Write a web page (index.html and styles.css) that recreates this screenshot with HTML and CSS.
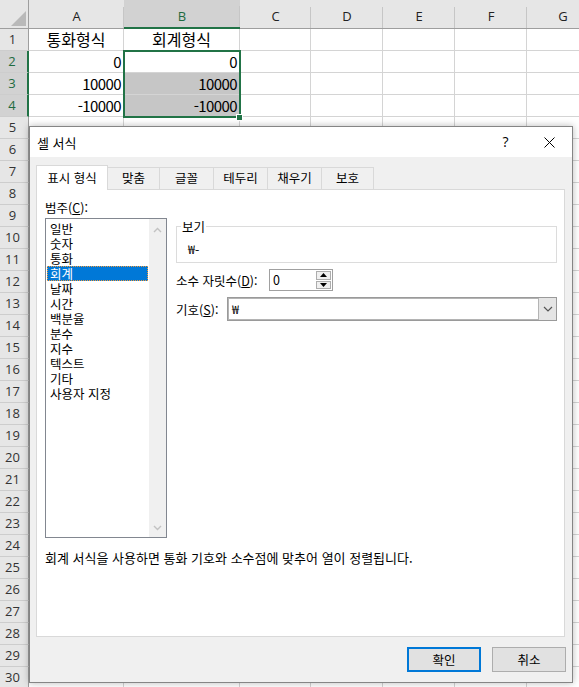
FILE: index.html
```html
<!DOCTYPE html>
<html lang="ko">
<head>
<meta charset="utf-8">
<title>셀 서식</title>
<link rel="stylesheet" href="styles.css">
</head>
<body>
<div class="sheet">
  <div class="corner"></div>
  <div class="ch">A</div><div class="ch sel">B</div><div class="ch">C</div><div class="ch">D</div><div class="ch">E</div><div class="ch">F</div><div class="ch">G</div>

  <div class="rh">1</div><div class="c ctr">통화형식</div><div class="c ctr">회계형식</div><div class="c"></div><div class="c"></div><div class="c"></div><div class="c"></div><div class="c"></div>
  <div class="rh sel">2</div><div class="c">0</div><div class="c">0</div><div class="c"></div><div class="c"></div><div class="c"></div><div class="c"></div><div class="c"></div>
  <div class="rh sel">3</div><div class="c">10000</div><div class="c hl">10000</div><div class="c"></div><div class="c"></div><div class="c"></div><div class="c"></div><div class="c"></div>
  <div class="rh sel">4</div><div class="c">-10000</div><div class="c hl">-10000</div><div class="c"></div><div class="c"></div><div class="c"></div><div class="c"></div><div class="c"></div>
  <div class="rh">5</div><div class="c"></div><div class="c"></div><div class="c"></div><div class="c"></div><div class="c"></div><div class="c"></div><div class="c"></div>
  <div class="rh">6</div><div class="c"></div><div class="c"></div><div class="c"></div><div class="c"></div><div class="c"></div><div class="c"></div><div class="c"></div>
  <div class="rh">7</div><div class="c"></div><div class="c"></div><div class="c"></div><div class="c"></div><div class="c"></div><div class="c"></div><div class="c"></div>
  <div class="rh">8</div><div class="c"></div><div class="c"></div><div class="c"></div><div class="c"></div><div class="c"></div><div class="c"></div><div class="c"></div>
  <div class="rh">9</div><div class="c"></div><div class="c"></div><div class="c"></div><div class="c"></div><div class="c"></div><div class="c"></div><div class="c"></div>
  <div class="rh">10</div><div class="c"></div><div class="c"></div><div class="c"></div><div class="c"></div><div class="c"></div><div class="c"></div><div class="c"></div>
  <div class="rh">11</div><div class="c"></div><div class="c"></div><div class="c"></div><div class="c"></div><div class="c"></div><div class="c"></div><div class="c"></div>
  <div class="rh">12</div><div class="c"></div><div class="c"></div><div class="c"></div><div class="c"></div><div class="c"></div><div class="c"></div><div class="c"></div>
  <div class="rh">13</div><div class="c"></div><div class="c"></div><div class="c"></div><div class="c"></div><div class="c"></div><div class="c"></div><div class="c"></div>
  <div class="rh">14</div><div class="c"></div><div class="c"></div><div class="c"></div><div class="c"></div><div class="c"></div><div class="c"></div><div class="c"></div>
  <div class="rh">15</div><div class="c"></div><div class="c"></div><div class="c"></div><div class="c"></div><div class="c"></div><div class="c"></div><div class="c"></div>
  <div class="rh">16</div><div class="c"></div><div class="c"></div><div class="c"></div><div class="c"></div><div class="c"></div><div class="c"></div><div class="c"></div>
  <div class="rh">17</div><div class="c"></div><div class="c"></div><div class="c"></div><div class="c"></div><div class="c"></div><div class="c"></div><div class="c"></div>
  <div class="rh">18</div><div class="c"></div><div class="c"></div><div class="c"></div><div class="c"></div><div class="c"></div><div class="c"></div><div class="c"></div>
  <div class="rh">19</div><div class="c"></div><div class="c"></div><div class="c"></div><div class="c"></div><div class="c"></div><div class="c"></div><div class="c"></div>
  <div class="rh">20</div><div class="c"></div><div class="c"></div><div class="c"></div><div class="c"></div><div class="c"></div><div class="c"></div><div class="c"></div>
  <div class="rh">21</div><div class="c"></div><div class="c"></div><div class="c"></div><div class="c"></div><div class="c"></div><div class="c"></div><div class="c"></div>
  <div class="rh">22</div><div class="c"></div><div class="c"></div><div class="c"></div><div class="c"></div><div class="c"></div><div class="c"></div><div class="c"></div>
  <div class="rh">23</div><div class="c"></div><div class="c"></div><div class="c"></div><div class="c"></div><div class="c"></div><div class="c"></div><div class="c"></div>
  <div class="rh">24</div><div class="c"></div><div class="c"></div><div class="c"></div><div class="c"></div><div class="c"></div><div class="c"></div><div class="c"></div>
  <div class="rh">25</div><div class="c"></div><div class="c"></div><div class="c"></div><div class="c"></div><div class="c"></div><div class="c"></div><div class="c"></div>
  <div class="rh">26</div><div class="c"></div><div class="c"></div><div class="c"></div><div class="c"></div><div class="c"></div><div class="c"></div><div class="c"></div>
  <div class="rh">27</div><div class="c"></div><div class="c"></div><div class="c"></div><div class="c"></div><div class="c"></div><div class="c"></div><div class="c"></div>
  <div class="rh">28</div><div class="c"></div><div class="c"></div><div class="c"></div><div class="c"></div><div class="c"></div><div class="c"></div><div class="c"></div>
  <div class="rh">29</div><div class="c"></div><div class="c"></div><div class="c"></div><div class="c"></div><div class="c"></div><div class="c"></div><div class="c"></div>
  <div class="rh">30</div><div class="c"></div><div class="c"></div><div class="c"></div><div class="c"></div><div class="c"></div><div class="c"></div><div class="c"></div>
</div>

<div class="selection"><span class="handle"></span></div>

<div class="dialog">
  <div class="titlebar">
    <div class="title">셀 서식</div>
    <div class="tbtn help">?</div>
    <div class="tbtn close">
      <svg width="11" height="11" viewBox="0 0 11 11"><path d="M0.5 0.5 L10.5 10.5 M10.5 0.5 L0.5 10.5" stroke="#000" stroke-width="1" fill="none"/></svg>
    </div>
  </div>
  <div class="dlg-body">
    <div class="tabs">
      <div class="tab active w72">표시 형식</div>
      <div class="tab w52">맞춤</div>
      <div class="tab w54">글꼴</div>
      <div class="tab w54">테두리</div>
      <div class="tab w54">채우기</div>
      <div class="tab w52">보호</div>
    </div>
    <div class="panel">
      <div class="top">
        <div class="left">
          <div class="lbl">범주(<u>C</u>):</div>
          <div class="listbox">
            <div class="items">
              <div class="item">일반</div>
              <div class="item">숫자</div>
              <div class="item">통화</div>
              <div class="item selected">회계</div>
              <div class="item">날짜</div>
              <div class="item">시간</div>
              <div class="item">백분율</div>
              <div class="item">분수</div>
              <div class="item">지수</div>
              <div class="item">텍스트</div>
              <div class="item">기타</div>
              <div class="item">사용자 지정</div>
            </div>
            <div class="scroll">
              <svg width="9" height="6" viewBox="0 0 9 6"><path d="M1 5 L4.5 1.5 L8 5" stroke="#c2c2c2" stroke-width="1.4" fill="none"/></svg>
              <svg width="9" height="6" viewBox="0 0 9 6"><path d="M1 1 L4.5 4.5 L8 1" stroke="#c2c2c2" stroke-width="1.4" fill="none"/></svg>
            </div>
          </div>
        </div>
        <div class="right">
          <div class="preview">
            <span class="preview-label">보기</span>
            <div class="preview-val">₩-</div>
          </div>
          <div class="field">
            <div class="flabel dec">소수 자릿수(<u>D</u>):</div>
            <div class="spin">
              <div class="spin-val">0</div>
              <div class="spin-btns">
                <div class="sbtn"><svg width="7" height="4" viewBox="0 0 7 4"><path d="M0 4 L3.5 0 L7 4 Z" fill="#000"/></svg></div>
                <div class="sbtn"><svg width="7" height="4" viewBox="0 0 7 4"><path d="M0 0 L3.5 4 L7 0 Z" fill="#000"/></svg></div>
              </div>
            </div>
          </div>
          <div class="field sym">
            <div class="flabel symlbl">기호(<u>S</u>):</div>
            <div class="combo">
              <div class="combo-val">₩</div>
              <div class="combo-btn"><svg width="10" height="6" viewBox="0 0 10 6"><path d="M1 1 L5 5 L9 1" stroke="#555" stroke-width="1.2" fill="none"/></svg></div>
            </div>
          </div>
        </div>
      </div>
      <div class="desc">회계 서식을 사용하면 통화 기호와 소수점에 맞추어 열이 정렬됩니다.</div>
    </div>
    <div class="buttons">
      <div class="btn default">확인</div>
      <div class="btn">취소</div>
    </div>
  </div>
</div>
</body>
</html>
```

FILE: styles.css
```css
html, body {
  margin: 0;
  padding: 0;
  overflow: hidden;
  background: #fff;
}
body {
  width: 579px;
  height: 687px;
  position: relative;
}

/* ---------- spreadsheet ---------- */
.sheet {
  display: grid;
  grid-template-columns: 29px 95px 116px 71px 72px 72px 72px 72px;
  grid-template-rows: 29px;
  grid-auto-rows: 22px;
  width: 599px;
}
.sheet > div {
  box-sizing: border-box;
}
.corner {
  background: #e6e6e6;
  border-right: 1px solid #9e9e9e;
  border-bottom: 1px solid #9e9e9e;
  position: relative;
}
.corner::after {
  content: "";
  position: absolute;
  right: 2px;
  bottom: 2px;
  width: 15px;
  height: 15px;
  background: #b9b9b9;
  clip-path: polygon(100% 0, 100% 100%, 0 100%);
}
.ch {
  background: linear-gradient(#c6c6c6, #c6c6c6) right bottom / 1px 21px no-repeat, #e6e6e6;
  border-bottom: 1px solid #9e9e9e;
  font: 13px/20px "Open Sans", sans-serif;
  color: #222;
  text-align: center;
  padding-top: 6px;
}
.ch.sel {
  background: linear-gradient(#c6c6c6, #c6c6c6) right bottom / 1px 21px no-repeat, #d2d2d2;
  border-bottom: 2px solid #217346;
  color: #1e6b3f;
}
.rh {
  background: #e6e6e6;
  border-right: 1px solid #9e9e9e;
  border-bottom: 1px solid #cdcdcd;
  font: 13px/21px "Open Sans", sans-serif;
  color: #333;
  text-align: center;
  padding-right: 3px;
}
.rh.sel {
  background: #d2d2d2;
  color: #1e6b3f;
  border-right: 2px solid #217346;
}
.c {
  border-right: 1px solid #d4d4d4;
  border-bottom: 1px solid #d4d4d4;
  font: 15px/21px "Noto Sans CJK KR", sans-serif;
  color: #000;
  text-align: right;
  padding: 0 2px;
  white-space: nowrap;
  letter-spacing: -0.6px;
}
.c.ctr {
  text-align: center;
  letter-spacing: 0;
  font-size: 16px;
}
.c.hl {
  background: #c6c6c6;
}
.selection {
  position: absolute;
  left: 123px;
  top: 50px;
  width: 118px;
  height: 68px;
  box-sizing: border-box;
  border: 2px solid #217346;
}
.handle {
  position: absolute;
  right: -4px;
  bottom: -5px;
  width: 5px;
  height: 5px;
  background: #217346;
  border: 1px solid #fff;
}

/* ---------- dialog ---------- */
.dialog {
  position: absolute;
  left: 29px;
  top: 126px;
  width: 544px;
  height: 557px;
  box-sizing: border-box;
  border: 1px solid #858585;
  background: #f0f0f0;
  box-shadow: 0 0 7px rgba(0, 0, 0, 0.28);
  display: flex;
  flex-direction: column;
  font: 12.5px/15px "Noto Sans CJK KR", sans-serif;
  color: #000;
}
.titlebar {
  height: 30px;
  background: #fff;
  display: flex;
  align-items: center;
  padding-left: 7px;
  flex: none;
}
.title {
  flex: 1;
  font-size: 13px;
  padding-top: 1px;
}
.tbtn {
  width: 46px;
  height: 30px;
  display: flex;
  align-items: center;
  justify-content: center;
}
.help {
  font: 14px/1 "Open Sans", sans-serif;
  color: #000;
  padding-left: 5px;
  box-sizing: border-box;
}
.dlg-body {
  flex: 1;
  padding: 8px 7px 0 6px;
  display: flex;
  flex-direction: column;
}
.tabs {
  display: flex;
  align-items: flex-start;
  height: 25px;
  margin-bottom: -1px;
  position: relative;
  z-index: 1;
}
.tab {
  box-sizing: border-box;
  height: 22px;
  margin-top: 2px;
  border-top: 1px solid #d9d9d9;
  border-right: 1px solid #d9d9d9;
  background: #f0f0f0;
  text-align: center;
  line-height: 20px;
}
.tab.active {
  height: 25px;
  margin-top: 0;
  border-left: 1px solid #d9d9d9;
  background: #fff;
  line-height: 24px;
}
.w72 { width: 72px; }
.w52 { width: 52px; }
.w54 { width: 54px; }

.panel {
  height: 448px;
  box-sizing: border-box;
  border: 1px solid #d9d9d9;
  background: #fff;
  padding: 10px 0 0 8px;
  flex: none;
}
.top {
  display: flex;
}
.left {
  width: 122px;
}
.lbl {
  height: 15px;
  margin-bottom: 3px;
}
.listbox {
  height: 320px;
  box-sizing: border-box;
  border: 1px solid #828790;
  display: flex;
}
.items {
  flex: 1;
  padding: 2px 1px 0 1px;
}
.item {
  height: 15px;
  line-height: 15px;
  padding-left: 3px;
  font-size: 12.5px;
}
.item.selected {
  background: #0078d7;
  color: #fff;
  outline: 1px dotted #f29a3c;
  outline-offset: -1px;
}
.scroll {
  width: 17px;
  background: #f0f0f0;
  display: flex;
  flex-direction: column;
  justify-content: space-between;
  align-items: center;
  padding: 8px 0 6px;
  box-sizing: border-box;
}
.scroll svg {
  display: block;
}
.right {
  margin-left: 9px;
  width: 381px;
}
.preview {
  margin-top: 26px;
  height: 37px;
  box-sizing: border-box;
  border: 1px solid #dcdcdc;
  position: relative;
}
.preview-label {
  position: absolute;
  left: 4px;
  top: -8px;
  background: #fff;
  padding: 0 1px;
}
.preview-val {
  padding: 14px 0 0 11px;
}
.field {
  display: flex;
  align-items: center;
  margin-top: 6px;
}
.flabel.dec {
  width: 93px;
}
.flabel.symlbl {
  width: 51px;
}
.spin {
  width: 64px;
  height: 22px;
  box-sizing: border-box;
  border: 1px solid #a0a0a0;
  display: flex;
}
.spin-val {
  flex: 1;
  padding-left: 3px;
  line-height: 20px;
}
.spin-btns {
  width: 15px;
  padding: 1px 1px 1px 0;
  display: flex;
  flex-direction: column;
  gap: 1px;
}
.sbtn {
  flex: 1;
  box-sizing: border-box;
  border: 1px solid #adadad;
  background: #f0f0f0;
  display: flex;
  align-items: center;
  justify-content: center;
}
.sbtn svg {
  display: block;
}
.combo {
  width: 330px;
  height: 24px;
  box-sizing: border-box;
  border: 1px solid #9a9a9a;
  box-shadow: inset 0 0 0 1px #b4b4b4;
  display: flex;
}
.combo-val {
  flex: 1;
  padding-left: 4px;
  line-height: 22px;
}
.combo-btn {
  width: 17px;
  background: #e5e5e5;
  border-left: 1px solid #b4b4b4;
  display: flex;
  align-items: center;
  justify-content: center;
}
.desc {
  margin-top: 12px;
  font-size: 13px;
}
.buttons {
  display: flex;
  justify-content: flex-end;
  gap: 11px;
  margin-top: 10px;
  margin-right: -1px;
}
.btn {
  width: 74px;
  height: 25px;
  box-sizing: border-box;
  border: 1px solid #adadad;
  background: #e1e1e1;
  text-align: center;
  line-height: 23px;
}
.btn.default {
  border: 2px solid #0078d7;
  line-height: 21px;
}
```
